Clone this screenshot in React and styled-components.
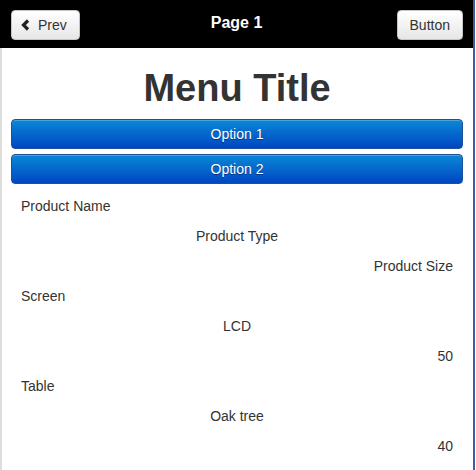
import styled, { createGlobalStyle } from "styled-components";

const GlobalStyle = createGlobalStyle`
  body {
    margin: 0;
    background: #ffffff;
    font-family: "Liberation Sans", Arial, sans-serif;
  }
`;

const Page = styled.div`
  width: 473px;
  min-height: 470px;
  border-right: 2px solid #3a5ea8;
  display: flex;
  flex-direction: column;
`;

const Header = styled.div`
  height: 48px;
  background: #000000;
  display: flex;
  align-items: center;
  justify-content: space-between;
  padding: 0 10px 0 11px;
  position: relative;
`;

const HeaderTitle = styled.h1`
  position: absolute;
  left: 0;
  right: 0;
  margin: 0;
  text-align: center;
  color: #ffffff;
  font-size: 16px;
  font-weight: bold;
  pointer-events: none;
  top: 14px;
`;

const HeaderButton = styled.button`
  height: 30px;
  padding: ${(p) => (p.$icon ? "0 12px 0 8px" : "0 12px")};
  display: flex;
  align-items: center;
  gap: 7px;
  background: linear-gradient(#ffffff, #e6e6e6);
  border: 1px solid #c6c6c6;
  border-radius: 4px;
  color: #333333;
  font-family: "Liberation Sans", Arial, sans-serif;
  font-size: 14px;
  margin-top: 2px;
`;

const Content = styled.div`
  flex: 1;
  border-left: 2px solid #dddddd;
  padding: 0 10px 0 9px;
`;

const Title = styled.h2`
  margin: 0;
  height: 71px;
  line-height: 80px;
  text-align: center;
  font-size: 38px;
  font-weight: bold;
  color: #333333;
`;

const OptionButton = styled.button`
  display: block;
  width: 100%;
  height: 30px;
  margin-bottom: 5px;
  border: 1px solid #1f4f97;
  border-radius: 4px;
  background: linear-gradient(#0a88d6, #0046c2);
  color: #ffffff;
  font-family: "Liberation Sans", Arial, sans-serif;
  font-size: 14px;
  text-shadow: 0 1px 0 #08337d;
  box-shadow: inset 0 1px 0 rgba(255, 255, 255, 0.25);
`;

const Grid = styled.div`
  margin-top: 7px;
  display: flex;
  flex-direction: column;
`;

const Cell = styled.div`
  height: 30px;
  line-height: 30px;
  padding: 0 10px;
  font-size: 14px;
  color: #333333;
  text-align: ${(p) => p.$align};
`;

const rows = [
  ["Product Name", "Product Type", "Product Size"],
  ["Screen", "LCD", "50"],
  ["Table", "Oak tree", "40"],
];

const aligns = ["left", "center", "right"];

const ChevronLeft = () => (
  <svg width="11" height="12" viewBox="0 0 11 12">
    <path d="M8 1.5 L3.5 6 L8 10.5" fill="none" stroke="#222" strokeWidth="3.2" />
  </svg>
);

export default function App() {
  return (
    <>
      <GlobalStyle />
      <Page>
        <Header>
          <HeaderButton $icon>
            <ChevronLeft />
            Prev
          </HeaderButton>
          <HeaderTitle>Page 1</HeaderTitle>
          <HeaderButton>Button</HeaderButton>
        </Header>
        <Content>
          <Title>Menu Title</Title>
          <OptionButton>Option 1</OptionButton>
          <OptionButton>Option 2</OptionButton>
          <Grid>
            {rows.map((row) =>
              row.map((text, i) => (
                <Cell key={row[0] + i} $align={aligns[i]}>
                  {text}
                </Cell>
              ))
            )}
          </Grid>
        </Content>
      </Page>
    </>
  );
}
